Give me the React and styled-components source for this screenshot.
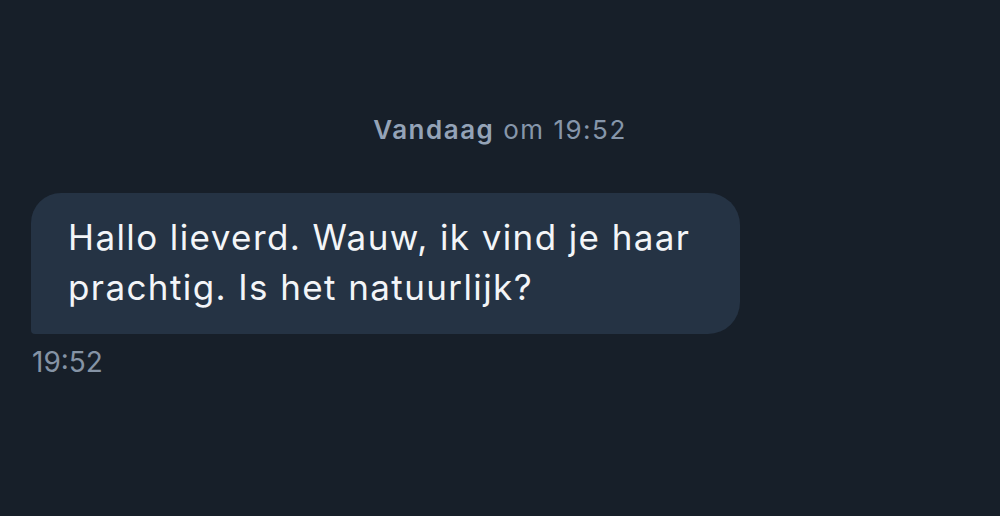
import styled, { createGlobalStyle } from "styled-components";

const GlobalStyle = createGlobalStyle`
  html, body {
    margin: 0;
    padding: 0;
    background: #171f29;
  }
  body {
    font-family: Inter, "Noto Sans", sans-serif;
    -webkit-font-smoothing: antialiased;
  }
`;

const Screen = styled.div`
  width: 1000px;
  height: 516px;
  box-sizing: border-box;
  background: #171f29;
  padding: 112px 31px 0;
  display: flex;
  flex-direction: column;
`;

const DayStamp = styled.div`
  text-align: center;
  font-size: 26px;
  line-height: 36px;
  letter-spacing: 1.5px;
  color: #8696aa;
  margin-bottom: 45px;

  b {
    font-weight: 600;
    color: #94a3b7;
  }
`;

const Message = styled.div`
  display: flex;
  flex-direction: column;
  align-items: flex-start;
  gap: 12px;
`;

const Bubble = styled.div`
  box-sizing: border-box;
  max-width: 709px;
  padding: 19px 40px 22px 37px;
  background: #253344;
  color: #f3f5f8;
  font-size: 35px;
  line-height: 50px;
  letter-spacing: 1.4px;
  border-radius: 30px 32px 32px 4px;
`;

const Time = styled.div`
  font-size: 28px;
  line-height: 32px;
  color: #8593a5;
  padding-left: 1px;
`;

export default function App() {
  return (
    <>
      <GlobalStyle />
      <Screen>
        <DayStamp>
          <b>Vandaag</b> om 19:52
        </DayStamp>
        <Message>
          <Bubble>
            Hallo lieverd. Wauw, ik vind je haar prachtig. Is het natuurlijk?
          </Bubble>
          <Time>19:52</Time>
        </Message>
      </Screen>
    </>
  );
}
